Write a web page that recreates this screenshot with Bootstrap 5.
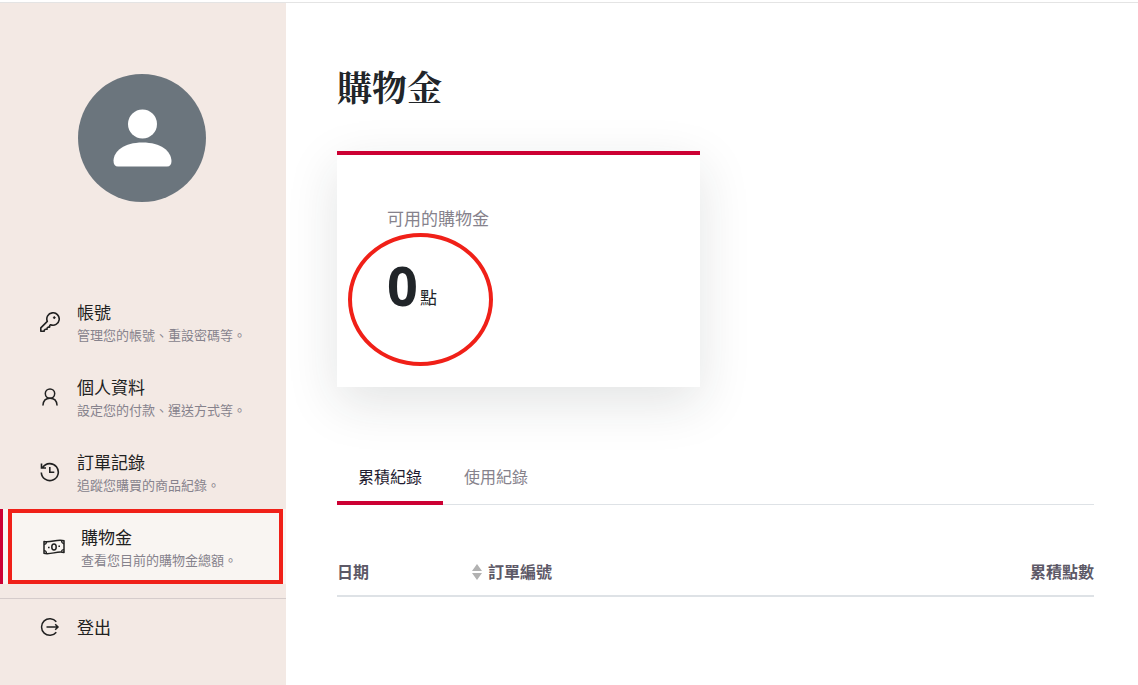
<!DOCTYPE html>
<html lang="zh-Hant">
<head>
<meta charset="utf-8">
<meta name="viewport" content="width=device-width, initial-scale=1">
<title>購物金</title>
<link href="https://cdn.jsdelivr.net/npm/bootstrap@5.3.0/dist/css/bootstrap.min.css" rel="stylesheet">
<style>
  :root { --brand: #cc0033; --marker: #f02018; --muted: #86828c; }
  body { font-family: "Noto Sans", "Noto Sans CJK TC", sans-serif; color: #212529; background: #fff; }
  .topbar { height: 3px; border-bottom: 1px solid #e4e4e4; }
  .side { width: 286px; background: #f3e9e4; padding-top: 71px; }
  .avatar { width: 128px; height: 128px; margin: 0 80px 82px 78px; background: #6b757d; color: #fff; }
  .side-link { height: 75px; padding-left: 40px; gap: 17px; color: #212121; text-decoration: none; }
  .side-link svg { width: 20px; height: 20px; flex: none; }
  .side-link.active { position: relative; background: #f9f5f2; border-left: 3px solid var(--brand); gap: 16px; }
  .side-link.active svg { width: 22px; height: 22px; }
  .side-link.short { height: 56px; }
  .side-title { font-size: 17px; line-height: 24px; padding-top: 2px; }
  .side-note { font-size: 13px; line-height: 20px; color: var(--muted); }
  .side-rule { margin: 14px 0 0; border-color: #d5cccb; opacity: 1; }
  .mark-box { position: absolute; inset: 0 3px 0 5px; border: 4px solid var(--marker); }
  .content { padding: 59px 44px 40px 51px; }
  .page-title { font-family: "Noto Serif CJK TC", "Noto Serif CJK JP", "Noto Sans CJK TC", serif; font-size: 35px; line-height: 48px; font-weight: 700; margin-bottom: 41px; }
  .balance { max-width: 363px; height: 236px; padding: 51px 50px; border: 0; border-top: 4px solid var(--brand); border-radius: 0; box-shadow: 0 16px 48px rgba(33, 41, 37, .125); }
  .balance-label { font-size: 17px; line-height: 26px; color: var(--muted); }
  .balance-value { position: relative; align-self: flex-start; margin-top: 17px; line-height: 72px; }
  .balance-value strong { font-size: 54px; font-weight: 700; }
  .balance-value span { display: inline-block; vertical-align: 2px; line-height: 24px; margin-left: 2px; font-size: 17px; }
  .mark-ring { position: absolute; left: -39px; top: -16px; width: 145px; height: 133px; border: 4px solid var(--marker); border-radius: 50%; }
  .record-tabs { margin-top: 64px; border-color: #dee2e6; }
  .record-tabs .nav-link { border: 0; border-bottom: 4px solid transparent; border-radius: 0; padding: 14px 21px 12px; font-size: 16px; line-height: 24px; color: var(--muted); background: none; }
  .record-tabs .nav-link.active { color: #1f1b30; border-color: var(--brand); background: none; }
  .records { margin-top: 43px; table-layout: fixed; }
  .records th { padding: 12px 0 11px; border-bottom: 2px solid #dee2e6; font-size: 16px; line-height: 24px; font-weight: 700; color: #5d5967; background: none; }
  .records .col-date { width: 151px; }
  .sorter { width: 10px; height: 16px; margin-right: 6px; }
</style>
</head>
<body class="d-flex flex-column min-vh-100">
<header class="topbar"></header>
<div class="d-flex flex-grow-1">
  <aside class="side flex-shrink-0">
    <div class="avatar rounded-circle">
      <svg viewBox="0 0 128 128" width="128" height="128" fill="currentColor" aria-hidden="true"><circle cx="64.500" cy="50" r="14.500"/><path d="M35.500 86.500C36 77 46 68.500 64.500 68.500S93 77 93.500 87C93.500 90.500 92 92.500 89 92.500H40C37 92.500 35.500 90.500 35.500 86.500Z"/></svg>
    </div>
    <nav aria-label="會員選單">
      <a class="side-link d-flex align-items-center" href="#account">
        <svg viewBox="0 0 20 20" fill="none" stroke="currentColor" stroke-width="1.600" stroke-linejoin="round" aria-hidden="true"><path d="M7.300 9.400A6.200 6.200 0 1 1 10.600 12.700L9.700 13.500V15.100H8.200L7.100 16V17.300H5.300L4.200 18.400V19.200H.8V15.900Z"/><circle cx="14.300" cy="5.600" r=".9" fill="currentColor" stroke-width="1"/></svg>
        <span><span class="side-title d-block">帳號</span><span class="side-note d-block">管理您的帳號、重設密碼等。</span></span>
      </a>
      <a class="side-link d-flex align-items-center" href="#profile">
        <svg viewBox="0 0 20 20" fill="none" stroke="currentColor" stroke-width="1.500" stroke-linecap="round" aria-hidden="true"><circle cx="10" cy="6.600" r="4.700"/><path d="M3 18C3.300 14 6 11.300 10 11.300S16.700 14 17 18"/></svg>
        <span><span class="side-title d-block">個人資料</span><span class="side-note d-block">設定您的付款、運送方式等。</span></span>
      </a>
      <a class="side-link d-flex align-items-center" href="#orders">
        <svg viewBox="0 0 20 20" fill="none" stroke="currentColor" stroke-width="1.600" aria-hidden="true"><path d="M1.300 10.500A8.500 8.500 0 1 0 2.700 5.400M1.500 1.600V6H6"/><path d="M9.800 5V10.200H14.300"/></svg>
        <span><span class="side-title d-block">訂單記錄</span><span class="side-note d-block">追蹤您購買的商品紀錄。</span></span>
      </a>
      <a class="side-link active d-flex align-items-center" href="#credits" aria-current="page">
        <svg viewBox="0 0 22 22" fill="none" stroke="currentColor" stroke-width="1.500" stroke-linejoin="round" aria-hidden="true"><path d="M1 5.500C7.500 7.200 14.500 2.500 21 4.800V16.500C14.500 14.500 7.500 19.200 1 17.300Z"/><ellipse cx="11" cy="11" rx="2.200" ry="3"/><path d="M1 8.300Q3.400 8.300 3.500 6M21 7.800Q18.500 7.300 18.500 4.600M1 14.600Q3.500 14.700 3.500 17.300M21 13.700Q18.600 13.700 18.500 15.700" stroke-width="1.200"/><path d="M5 11.500h1.600M15.400 10.200H17"/></svg>
        <span><span class="side-title d-block">購物金</span><span class="side-note d-block">查看您目前的購物金總額。</span></span>
        <span class="mark-box"></span>
      </a>
      <hr class="side-rule">
      <a class="side-link short d-flex align-items-center" href="#logout">
        <svg viewBox="0 0 20 20" fill="none" stroke="currentColor" stroke-width="1.500" aria-hidden="true"><path d="M16.300 4.800A8.300 8.300 0 1 0 16.300 15.200M6.500 10H18M15.200 7.200L18 10L15.200 12.800"/></svg>
        <span class="side-title">登出</span>
      </a>
    </nav>
  </aside>
  <main class="content flex-grow-1">
    <h1 class="page-title">購物金</h1>
    <section class="card balance">
      <div class="balance-label">可用的購物金</div>
      <div class="balance-value"><strong>0</strong><span>點</span><i class="mark-ring"></i></div>
    </section>
    <ul class="nav nav-tabs record-tabs" role="tablist">
      <li class="nav-item" role="presentation"><button class="nav-link active" type="button" role="tab" aria-selected="true">累積紀錄</button></li>
      <li class="nav-item" role="presentation"><button class="nav-link" type="button" role="tab" aria-selected="false">使用紀錄</button></li>
    </ul>
    <table class="table records mb-0">
      <thead>
        <tr>
          <th class="col-date" scope="col"><span class="d-flex justify-content-between align-items-center">日期<svg class="sorter" viewBox="0 0 10 16" fill="#b2b2b2" aria-hidden="true"><path d="M5 0L10 7H0ZM0 9H10L5 16Z"/></svg></span></th>
          <th scope="col">訂單編號</th>
          <th class="text-end" scope="col">累積點數</th>
        </tr>
      </thead>
    </table>
  </main>
</div>
<script src="https://cdn.jsdelivr.net/npm/bootstrap@5.3.0/dist/js/bootstrap.bundle.min.js"></script>
</body>
</html>
